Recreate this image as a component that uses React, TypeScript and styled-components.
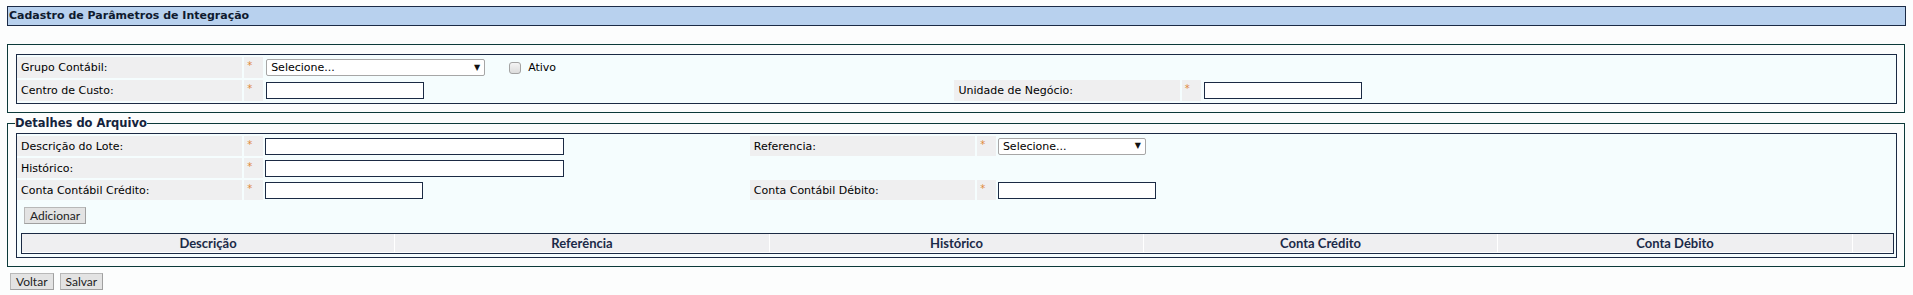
import React from 'react';
import styled, { createGlobalStyle } from 'styled-components';

const GlobalStyle = createGlobalStyle`
  html, body { margin: 0; padding: 0; background: #fcfdfd; }
  body {
    font-family: "DejaVu Sans", Verdana, sans-serif;
    font-size: 11px;
    color: #000;
  }
`;

const Page = styled.div`
  padding: 6px 7px 0 7px;
`;

const TitleBar = styled.div`
  height: 18px;
  line-height: 18px;
  border: 1px solid #1b2b46;
  background: #b8d1ee;
  padding-left: 1px;
  font-weight: bold;
  color: #0f1a2e;
`;

const FieldSet = styled.fieldset<{ $top: number; $padTop: number }>`
  margin: ${(p) => p.$top}px 1px 0 0;
  padding: ${(p) => p.$padTop}px 7px 8px 8px;
  border: 1px solid #0c3a3a;
  min-inline-size: 0;
`;

const Legend = styled.legend`
  padding: 0;
  margin-left: -1px;
  font-weight: bold;
  font-size: 11.5px;
  line-height: 14px;
  color: #14233c;
`;

const Panel = styled.div`
  border: 1px solid #1b2a44;
  background: #f5fdfe;
  padding: 2px 1px 2px 0;
`;

const FormGrid = styled.div<{ $cols: string; $row: number }>`
  display: grid;
  grid-template-columns: ${(p) => p.$cols};
  grid-auto-rows: ${(p) => p.$row}px;
  gap: 2px;
`;

const Label = styled.div`
  background: #efeff0;
  padding-left: 4px;
  display: flex;
  align-items: center;
  white-space: nowrap;
  color: #000;
`;

const Required = styled.div`
  background: #efeff0;
  color: #e0883a;
  padding: 4px 0 0 3px;
  font-size: 10px;
  line-height: 10px;
`;

const Field = styled.div<{ $pad: number }>`
  display: flex;
  align-items: center;
  padding-left: ${(p) => p.$pad}px;
`;

const Empty = styled.div``;

const TextInput = styled.input<{ $w: number }>`
  width: ${(p) => p.$w}px;
  height: 17px;
  box-sizing: border-box;
  border: 1px solid #1b2a44;
  background: #fff;
  padding: 0 2px;
  margin: 0;
  font: inherit;
  outline: none;
`;

const SelectBox = styled.div<{ $w: number }>`
  width: ${(p) => p.$w}px;
  height: 17px;
  box-sizing: border-box;
  border: 1px solid #a6a6a6;
  border-radius: 2px;
  background: #fff;
  display: flex;
  align-items: center;
  justify-content: space-between;
  padding: 0 4px 0 4px;
  color: #000;
`;

const Arrow = styled.span`
  font-size: 8px;
  color: #111;
  line-height: 1;
`;

const CheckBox = styled.span`
  width: 12px;
  height: 12px;
  box-sizing: border-box;
  margin-left: 24px;
  border: 1px solid #a3a3a3;
  border-radius: 3px;
  background: linear-gradient(#f4f4f4, #dcdcdc);
`;

const CheckText = styled.span`
  margin-left: 7px;
  color: #000;
`;

const Button = styled.button`
  font-family: Lato, "Open Sans", sans-serif;
  font-size: 12px;
  height: 17px;
  line-height: 15px;
  padding: 0 5px;
  margin: 0;
  border: 1px solid #b8b8b8;
  border-right-color: #a0a0a0;
  border-bottom-color: #a0a0a0;
  background: #e3e3e3;
  color: #222;
  border-radius: 0;
`;

const ActionRow = styled.div`
  padding: 7px 0 0 7px;
  display: flex;
`;

const ResultHeader = styled.div`
  margin: 9px 1px 1px 4px;
  border: 1px solid #1b2a44;
  background: #fff;
  padding: 0 0 1px 0;
  display: grid;
  grid-template-columns: 373fr 375fr 374fr 354fr 355fr 40fr;
  column-gap: 1px;
`;

const HeadCell = styled.div`
  background: #efeff1;
  height: 18px;
  line-height: 18px;
  text-align: center;
  font-family: Lato, "Open Sans", sans-serif;
  font-weight: bold;
  font-size: 13px;
  color: #1b2a48;
`;

const ButtonBar = styled.div`
  display: flex;
  gap: 6px;
  padding: 6px 0 0 3px;
`;

const headers = ['Descrição', 'Referência', 'Histórico', 'Conta Crédito', 'Conta Débito', ''];

export default function App() {
  return (
    <>
      <GlobalStyle />
      <Page>
        <TitleBar>Cadastro de Parâmetros de Integração</TitleBar>

        <FieldSet $top={18} $padTop={9}>
          <Panel>
            <FormGrid $cols="12% 1% 36.6% 12% 1% 1fr" $row={21}>
              <Label>Grupo Contábil:</Label>
              <Required>*</Required>
              <Field $pad={1}>
                <SelectBox $w={219}>
                  <span>Selecione...</span>
                  <Arrow>▼</Arrow>
                </SelectBox>
                <CheckBox />
                <CheckText>Ativo</CheckText>
              </Field>
              <Empty />
              <Empty />
              <Empty />

              <Label>Centro de Custo:</Label>
              <Required>*</Required>
              <Field $pad={1}>
                <TextInput $w={158} />
              </Field>
              <Label>Unidade de Negócio:</Label>
              <Required>*</Required>
              <Field $pad={1}>
                <TextInput $w={158} />
              </Field>
            </FormGrid>
          </Panel>
        </FieldSet>

        <FieldSet $top={3} $padTop={3}>
          <Legend>Detalhes do Arquivo</Legend>
          <Panel>
            <FormGrid $cols="12% 1% 25.7% 12% 1% 1fr" $row={20}>
              <Label>Descrição do Lote:</Label>
              <Required>*</Required>
              <Field $pad={0}>
                <TextInput $w={299} />
              </Field>
              <Label>Referencia:</Label>
              <Required>*</Required>
              <Field $pad={0}>
                <SelectBox $w={148}>
                  <span>Selecione...</span>
                  <Arrow>▼</Arrow>
                </SelectBox>
              </Field>

              <Label>Histórico:</Label>
              <Required>*</Required>
              <Field $pad={0}>
                <TextInput $w={299} />
              </Field>
              <Empty />
              <Empty />
              <Empty />

              <Label>Conta Contábil Crédito:</Label>
              <Required>*</Required>
              <Field $pad={0}>
                <TextInput $w={158} />
              </Field>
              <Label>Conta Contábil Débito:</Label>
              <Required>*</Required>
              <Field $pad={0}>
                <TextInput $w={158} />
              </Field>
            </FormGrid>
            <ActionRow>
              <Button>Adicionar</Button>
            </ActionRow>
            <ResultHeader>
              {headers.map((h, i) => (
                <HeadCell key={i}>{h}</HeadCell>
              ))}
            </ResultHeader>
          </Panel>
        </FieldSet>

        <ButtonBar>
          <Button>Voltar</Button>
          <Button>Salvar</Button>
        </ButtonBar>
      </Page>
    </>
  );
}
